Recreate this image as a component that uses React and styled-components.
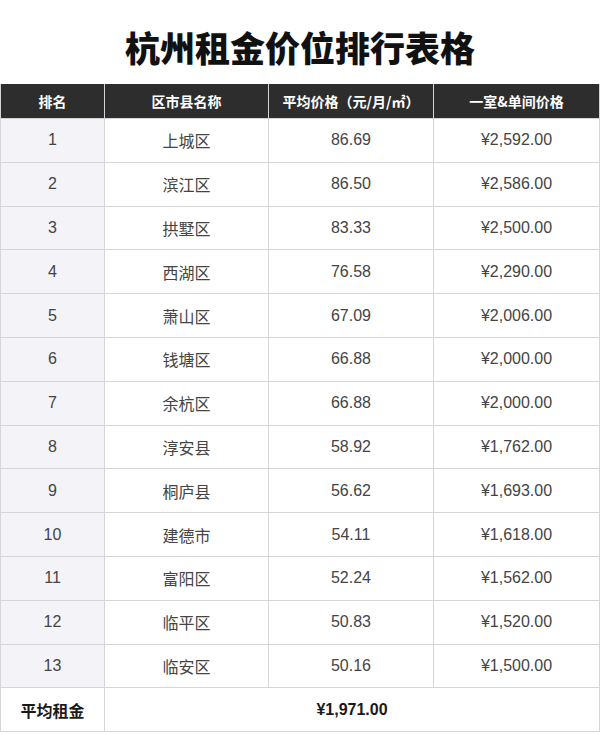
import React from "react";
import styled, { createGlobalStyle } from "styled-components";

const GlobalStyle = createGlobalStyle`
  body {
    margin: 0;
    background: #fff;
    font-family: "Liberation Sans", "Noto Sans CJK SC", sans-serif;
  }
`;

const Page = styled.div`
  width: 600px;
`;

const Title = styled.h1`
  margin: 0;
  height: 84px;
  display: flex;
  align-items: center;
  justify-content: center;
  padding-top: 8px;
  box-sizing: border-box;
  font-size: 35px;
  font-weight: 900;
  color: #111;
  font-family: "Noto Sans CJK SC", sans-serif;
`;

const Table = styled.table`
  width: 599px;
  border-collapse: collapse;
  table-layout: fixed;
`;

const HeadCell = styled.th`
  height: 34px;
  padding: 0;
  background: #2d2d2d;
  color: #fff;
  font-size: 14px;
  font-weight: 700;
  font-family: "Noto Sans CJK SC", sans-serif;
  border: 1px solid #d4d4d4;
  border-top: none;
  text-align: center;
`;

const Cell = styled.td`
  height: 42.8px;
  padding: 0;
  text-align: center;
  font-size: 16px;
  color: ${(p) => (p.$bold ? "#1a1a1a" : "#444")};
  border: 1px solid #d6d6d6;
  background: ${(p) => (p.$shade ? "#f3f3f8" : "#fff")};
  font-weight: ${(p) => (p.$bold ? 700 : 400)};
`;

const rows = [
  ["上城区", "86.69", "¥2,592.00"],
  ["滨江区", "86.50", "¥2,586.00"],
  ["拱墅区", "83.33", "¥2,500.00"],
  ["西湖区", "76.58", "¥2,290.00"],
  ["萧山区", "67.09", "¥2,006.00"],
  ["钱塘区", "66.88", "¥2,000.00"],
  ["余杭区", "66.88", "¥2,000.00"],
  ["淳安县", "58.92", "¥1,762.00"],
  ["桐庐县", "56.62", "¥1,693.00"],
  ["建德市", "54.11", "¥1,618.00"],
  ["富阳区", "52.24", "¥1,562.00"],
  ["临平区", "50.83", "¥1,520.00"],
  ["临安区", "50.16", "¥1,500.00"],
];

export default function App() {
  return (
    <Page>
      <GlobalStyle />
      <Title>杭州租金价位排行表格</Title>
      <Table>
        <colgroup>
          <col style={{ width: 104 }} />
          <col style={{ width: 164 }} />
          <col style={{ width: 165 }} />
          <col style={{ width: 166 }} />
        </colgroup>
        <thead>
          <tr>
            <HeadCell>排名</HeadCell>
            <HeadCell>区市县名称</HeadCell>
            <HeadCell>平均价格（元/月/㎡）</HeadCell>
            <HeadCell>一室&amp;单间价格</HeadCell>
          </tr>
        </thead>
        <tbody>
          {rows.map((r, i) => (
            <tr key={r[0]}>
              <Cell $shade>{i + 1}</Cell>
              <Cell>{r[0]}</Cell>
              <Cell>{r[1]}</Cell>
              <Cell>{r[2]}</Cell>
            </tr>
          ))}
          <tr>
            <Cell $bold>平均租金</Cell>
            <Cell $bold colSpan={3}>¥1,971.00</Cell>
          </tr>
        </tbody>
      </Table>
    </Page>
  );
}
